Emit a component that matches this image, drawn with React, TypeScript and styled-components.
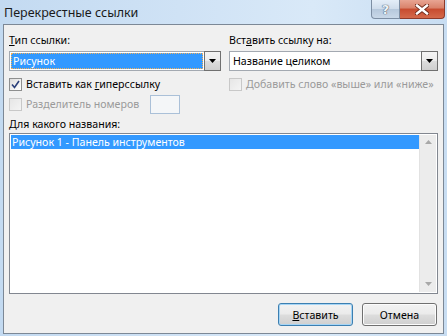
import React from "react";
import styled, { createGlobalStyle } from "styled-components";

const Global = createGlobalStyle`
  html, body { margin: 0; padding: 0; }
  body { font-family: "Noto Sans", "Open Sans", sans-serif; font-size: 10.6px; color: #000; }
  * { box-sizing: border-box; }
`;

const Window = styled.div`
  width: 447px;
  height: 336px;
  display: flex;
  flex-direction: column;
  padding: 0 3px 2px 3px;
  background: linear-gradient(90deg, #c3daf1 0%, #cfe2f5 40%, #d9e9f8 70%, #c8ddf2 100%);
`;

const TitleBar = styled.div`
  height: 24px;
  flex: none;
  display: flex;
  align-items: flex-start;
  justify-content: space-between;
`;

const Title = styled.div`
  padding: 5px 0 0 1px;
  font-size: 12.5px;
  line-height: 16px;
  color: #1a1a1a;
`;

const Caption = styled.div`
  display: flex;
  margin-right: -1px;
`;

const CapBtn = styled.div<{ $kind: "help" | "close" }>`
  height: 19px;
  width: ${(p) => (p.$kind === "help" ? "29px" : "45px")};
  display: flex;
  align-items: center;
  justify-content: center;
  border: 1px solid ${(p) => (p.$kind === "help" ? "#7d8ea3" : "#8d3a2a")};
  border-top: none;
  border-left: ${(p) => (p.$kind === "help" ? "1px solid #7d8ea3" : "none")};
  border-radius: ${(p) => (p.$kind === "help" ? "0 0 0 4px" : "0 0 4px 0")};
  background: ${(p) =>
    p.$kind === "help"
      ? "linear-gradient(180deg, #e4eef8 0%, #cfdceb 50%, #b6c8dc 51%, #c9d8e8 100%)"
      : "linear-gradient(180deg, #e8a593 0%, #d9816a 45%, #c74b2f 50%, #d4694b 100%)"};
`;

const HelpMark = styled.span`
  font-family: "DejaVu Sans", sans-serif;
  font-weight: bold;
  font-size: 13px;
  line-height: 13px;
  color: #eef3f8;
  text-shadow: 0 0 1px #3a4a5e, 0 0 1px #3a4a5e;
`;

const Client = styled.div`
  flex: 1;
  display: flex;
  flex-direction: column;
  border: 1px solid #7c8896;
  background: #f0f0f0;
  padding: 8px 5px 7px 5px;
`;

const TopGrid = styled.div`
  display: grid;
  grid-template-columns: 212px 209px;
  column-gap: 8px;
`;

const Column = styled.div`
  display: flex;
  flex-direction: column;
`;

const Label = styled.div<{ $top?: number }>`
  line-height: 15px;
  height: 15px;
  margin-top: ${(p) => p.$top ?? 0}px;
  white-space: nowrap;
`;

const U = styled.span`
  text-decoration: underline;
  text-underline-offset: 1px;
`;

const Combo = styled.div`
  margin-top: 3px;
  height: 20px;
  display: flex;
`;

const ComboField = styled.div`
  flex: 1;
  border: 1px solid #a3a9b1;
  border-right: none;
  background: #fff;
  padding: 1px;
  display: flex;
`;

const ComboText = styled.div<{ $selected?: boolean }>`
  flex: 1;
  line-height: 16px;
  padding-left: 2px;
  background: ${(p) => (p.$selected ? "#3399ff" : "transparent")};
  color: ${(p) => (p.$selected ? "#fff" : "#000")};
  outline: ${(p) => (p.$selected ? "1px dotted #f3b05a" : "none")};
  outline-offset: -1px;
`;

const DropBtn = styled.div`
  width: 17px;
  border: 1px solid #707070;
  background: linear-gradient(180deg, #f4f4f4 0%, #ececec 48%, #dcdcdc 52%, #cfcfcf 100%);
  display: flex;
  align-items: center;
  justify-content: center;
`;

const CheckRow = styled.div<{ $top?: number; $disabled?: boolean }>`
  margin-top: ${(p) => p.$top ?? 0}px;
  height: 20px;
  display: flex;
  align-items: center;
  gap: 4px;
  color: ${(p) => (p.$disabled ? "#9a9a9a" : "#000")};
  white-space: nowrap;
`;

const Box = styled.div<{ $disabled?: boolean }>`
  width: 13px;
  height: 13px;
  flex: none;
  border: 1px solid ${(p) => (p.$disabled ? "#c8c8c8" : "#8e8f8f")};
  background: ${(p) =>
    p.$disabled
      ? "linear-gradient(135deg, #e6e6e6 0%, #f4f4f4 100%)"
      : "linear-gradient(135deg, #dcdcdc 0%, #f2f2f2 60%, #ffffff 100%)"};
  display: flex;
  align-items: center;
  justify-content: center;
`;

const SmallInput = styled.div`
  width: 30px;
  height: 19px;
  margin-left: 7px;
  border: 1px solid #aac0d8;
  background: #f4f6f8;
`;

const ListBox = styled.div`
  flex: 1;
  margin-top: 1px;
  border: 1px solid #828790;
  background: #fff;
  display: flex;
  padding: 1px;
`;

const ListItems = styled.div`
  flex: 1;
`;

const ListItem = styled.div<{ $selected?: boolean }>`
  height: 14px;
  line-height: 14px;
  padding-left: 1px;
  background: ${(p) => (p.$selected ? "#3399ff" : "transparent")};
  color: ${(p) => (p.$selected ? "#fff" : "#000")};
  white-space: nowrap;
`;

const ScrollBar = styled.div`
  width: 17px;
  display: flex;
  flex-direction: column;
  justify-content: space-between;
  align-items: center;
  background: #ececec;
  border-left: 1px solid #e2e2e2;
  padding: 5px 0 6px;
`;

const ButtonRow = styled.div`
  margin-top: 9px;
  display: flex;
  justify-content: flex-end;
  gap: 9px;
  padding-right: 1px;
`;

const Button = styled.div<{ $default?: boolean }>`
  width: 75px;
  height: 23px;
  display: flex;
  align-items: center;
  justify-content: center;
  border: 1px solid ${(p) => (p.$default ? "#3c7fb1" : "#707070")};
  border-radius: 3px;
  background: linear-gradient(180deg, #f2f2f2 0%, #ebebeb 48%, #dddddd 52%, #cfcfcf 100%);
  box-shadow: inset 0 0 0 1px ${(p) => (p.$default ? "#a6d5f5" : "#fcfcfc")};
`;

const Tri = ({ color, up }: { color: string; up?: boolean }) => (
  <svg width="7" height="4" viewBox="0 0 7 4">
    <polygon points={up ? "0,4 7,4 3.5,0" : "0,0 7,0 3.5,4"} fill={color} />
  </svg>
);

const Check = () => (
  <svg width="9" height="9" viewBox="0 0 9 9">
    <polyline points="1,4.5 3.5,7.5 8,1" fill="none" stroke="#2a3f7a" strokeWidth="1.6" />
  </svg>
);

const CloseX = () => (
  <svg width="14" height="11" viewBox="0 0 14 11">
    <path d="M2,1.5 L12,9.5 M12,1.5 L2,9.5" stroke="#6b2617" strokeWidth="4.2" strokeLinecap="square" />
    <path d="M2,1.5 L12,9.5 M12,1.5 L2,9.5" stroke="#ffffff" strokeWidth="2.4" strokeLinecap="square" />
  </svg>
);

export default function App() {
  return (
    <>
      <Global />
      <Window>
        <TitleBar>
          <Title>Перекрестные ссылки</Title>
          <Caption>
            <CapBtn $kind="help">
              <HelpMark>?</HelpMark>
            </CapBtn>
            <CapBtn $kind="close">
              <CloseX />
            </CapBtn>
          </Caption>
        </TitleBar>
        <Client>
          <TopGrid>
            <Column>
              <Label>
                <U>Т</U>ип ссылки:
              </Label>
              <Combo>
                <ComboField>
                  <ComboText $selected>Рисунок</ComboText>
                </ComboField>
                <DropBtn>
                  <Tri color="#000" />
                </DropBtn>
              </Combo>
              <CheckRow $top={3}>
                <Box>
                  <Check />
                </Box>
                <span>
                  Вставить как <U>г</U>иперссылку
                </span>
              </CheckRow>
              <CheckRow $disabled>
                <Box $disabled />
                <span>Разделитель номеров</span>
                <SmallInput />
              </CheckRow>
            </Column>
            <Column>
              <Label>
                Вст<U>а</U>вить ссылку на:
              </Label>
              <Combo>
                <ComboField>
                  <ComboText>Название целиком</ComboText>
                </ComboField>
                <DropBtn>
                  <Tri color="#000" />
                </DropBtn>
              </Combo>
              <CheckRow $top={3} $disabled>
                <Box $disabled />
                <span>Добавить слово «выше» или «ниже»</span>
              </CheckRow>
            </Column>
          </TopGrid>
          <Label $top={3}>
            <U>Д</U>ля какого названия:
          </Label>
          <ListBox>
            <ListItems>
              <ListItem $selected>Рисунок 1 - Панель инструментов</ListItem>
            </ListItems>
            <ScrollBar>
              <Tri color="#a8a8a8" up />
              <Tri color="#a8a8a8" />
            </ScrollBar>
          </ListBox>
          <ButtonRow>
            <Button $default>
              <span>
                <U>В</U>ставить
              </span>
            </Button>
            <Button>Отмена</Button>
          </ButtonRow>
        </Client>
      </Window>
    </>
  );
}
